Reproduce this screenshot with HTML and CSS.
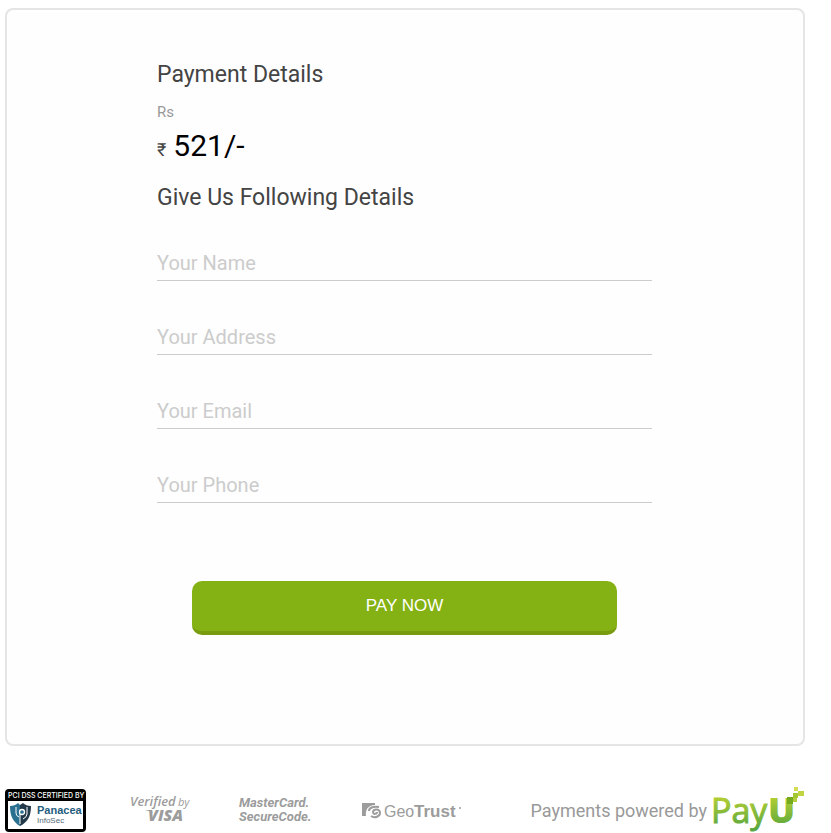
FILE: index.html
```html
<!DOCTYPE html>
<html lang="en">
<head>
<meta charset="utf-8">
<title>Payment Details</title>
<link rel="stylesheet" href="styles.css">
</head>
<body>
<main class="card">
  <form class="form">
    <h1 class="heading">Payment Details</h1>
    <p class="currency">Rs</p>
    <p class="amount"><span class="rupee">₹</span><span>521/-</span></p>
    <h2 class="heading">Give Us Following Details</h2>
    <div class="fields">
      <input class="field" type="text" placeholder="Your Name" aria-label="Your Name">
      <input class="field" type="text" placeholder="Your Address" aria-label="Your Address">
      <input class="field" type="email" placeholder="Your Email" aria-label="Your Email">
      <input class="field" type="tel" placeholder="Your Phone" aria-label="Your Phone">
    </div>
    <button class="pay" type="submit">PAY NOW</button>
  </form>
</main>
<footer class="footer">
  <div class="seals">
    <svg width="81" height="43" viewBox="0 0 81 43" role="img">
      <rect width="81" height="43" rx="4" fill="#000"/>
      <rect x="3" y="12" width="75" height="28" fill="#fff"/>
      <text class="seal-top" x="3" y="9" fill="#fff">PCI DSS CERTIFIED BY</text>
      <path d="M5 17q5 0 8-3l2 2v21C8 33 5 27 5 17z" fill="#2a7191"/>
      <path d="M26 17q-5 0-8-3l-3 2v21c8-4 11-10 11-20z" fill="#22394a"/>
      <path d="M11 18v6q0 3 3 4M15 35V24" fill="none" stroke="#fff" stroke-width="1"/>
      <circle cx="17" cy="23" r="2.5" fill="#2a7191" stroke="#fff" stroke-width="1.3"/>
      <path d="M22 18v7q0 3-4 5" fill="none" stroke="#fff" stroke-width="1"/>
      <text class="seal-name" x="32" y="25" fill="#245d7d">Panacea</text>
      <text class="seal-sub" x="32" y="34" fill="#566b78">InfoSec</text>
    </svg>
    <svg width="65" height="32" viewBox="0 0 65 32" role="img" fill="#9c9c9c">
      <text class="verified" x="0" y="12">Verified</text>
      <text class="by" x="48" y="12">by</text>
      <text class="visa" x="18" y="27">VISA</text>
      <path d="M15 16h6l2 3q-3-2-8-3z"/>
    </svg>
    <svg width="79" height="32" viewBox="0 0 79 32" role="img" fill="#9c9c9c">
      <text class="mastercard" x="0" y="13">MasterCard.</text>
      <text class="mastercard" x="0" y="27">SecureCode.</text>
    </svg>
    <svg width="99" height="24" viewBox="0 0 99 24" role="img" fill="#9c9c9c">
      <path d="M0 5h13v2C6 7 3 12 4 18H0z"/>
      <path d="M7 13c0-3 4-5 10-4M9 18c4 3 9 0 9-3 0-4-6-5-7-1 0 3 4 2 4 0" fill="none" stroke="#9c9c9c" stroke-width="2"/>
      <text class="geo" x="22" y="19">Geo</text>
      <text class="trust" x="52" y="19">Trust</text>
      <circle cx="98" cy="10" r="1"/>
    </svg>
  </div>
  <div class="powered">
    <span>Payments powered by</span>
    <svg width="93" height="46" viewBox="0 0 93 46" role="img">
      <defs>
        <linearGradient id="green" gradientUnits="userSpaceOnUse" x1="0" y1="8" x2="0" y2="42">
          <stop offset="0" stop-color="#b9d032"/>
          <stop offset="1" stop-color="#57a63f"/>
        </linearGradient>
      </defs>
      <text class="payu" x="-1" y="36" fill="url(#green)" stroke="url(#green)">Pay</text>
      <text class="payu-u" x="56" y="36" fill="url(#green)">U</text>
      <path d="M75 10h6v7h-6z" fill="#75a91e"/>
      <path d="M86 4h6v5h-6z" fill="#c1d541"/>
      <path d="M81 6h5v5h-5z" fill="#a3c832"/>
      <path d="M81 11h4v4h-4z" fill="#b2ce3c"/>
      <path d="M82 0h4v4h-4z" fill="#d2dc54"/>
    </svg>
  </div>
</footer>
</body>
</html>
```
FILE: styles.css
```css
* {
  box-sizing: border-box;
}

body {
  margin: 8px 26px 0 5px;
  background: #fff;
  color: #444;
  font-family: Roboto, "Liberation Sans", sans-serif;
}

.card {
  padding: 49px 151px 109px 150px;
  border: 2px solid #e5e5e5;
  border-radius: 8px;
  background: #fefefe;
}

.form {
  display: flex;
  flex-direction: column;
}

.heading {
  margin: 0;
  font-size: 23px;
  font-weight: 400;
  line-height: 32px;
}

.currency {
  margin: 11px 0 0;
  color: #999;
  font-size: 15px;
  line-height: 20px;
}

.amount {
  display: flex;
  align-items: baseline;
  gap: 7px;
  margin: 4px 0 12px;
  color: #000;
  font-size: 30px;
  line-height: 40px;
}

.rupee {
  color: #444;
  font-size: 18px;
}

.fields {
  display: grid;
  gap: 38px;
  margin-top: 31px;
}

.field {
  width: 100%;
  height: 36px;
  padding: 0;
  border: 0;
  border-bottom: 1px solid #ccc;
  background: transparent;
  color: #444;
  font: 20px Roboto, sans-serif;
}

.field::placeholder {
  color: #ccc;
}

.pay {
  height: 54px;
  margin: 78px 35px 0;
  border: 0;
  border-bottom: 4px solid #789b10;
  border-radius: 10px;
  background: #84b113;
  color: #fff;
  font: 17px "Liberation Sans", sans-serif;
}

.footer,
.powered {
  display: flex;
  align-items: center;
}

.footer {
  justify-content: space-between;
  margin-top: 41px;
}

.seals {
  display: flex;
  align-items: center;
  gap: 44px;
}

.powered {
  gap: 5px;
  color: #999;
  font-size: 18px;
}

svg {
  display: block;
  overflow: visible;
  font-family: "Liberation Sans", sans-serif;
}

.seal-top {
  font: 500 7px Inter, sans-serif;
}

.seal-name {
  font-size: 11px;
  font-weight: 700;
}

.seal-sub {
  font-size: 8px;
}

.verified {
  font: italic 600 13px "Open Sans", sans-serif;
}

.by {
  font: italic 11px "Open Sans", sans-serif;
}

.visa {
  font: italic 800 16px "Open Sans", sans-serif;
}

.mastercard {
  font: italic 700 13px Roboto, sans-serif;
}

.geo {
  font-size: 16px;
}

.trust {
  font-size: 17px;
  font-weight: 700;
}

.payu {
  font: 400 34px "Open Sans", sans-serif;
  stroke-width: 1px;
  stroke-linejoin: round;
}

.payu-u {
  font: 800 36px "Open Sans", sans-serif;
}
```
